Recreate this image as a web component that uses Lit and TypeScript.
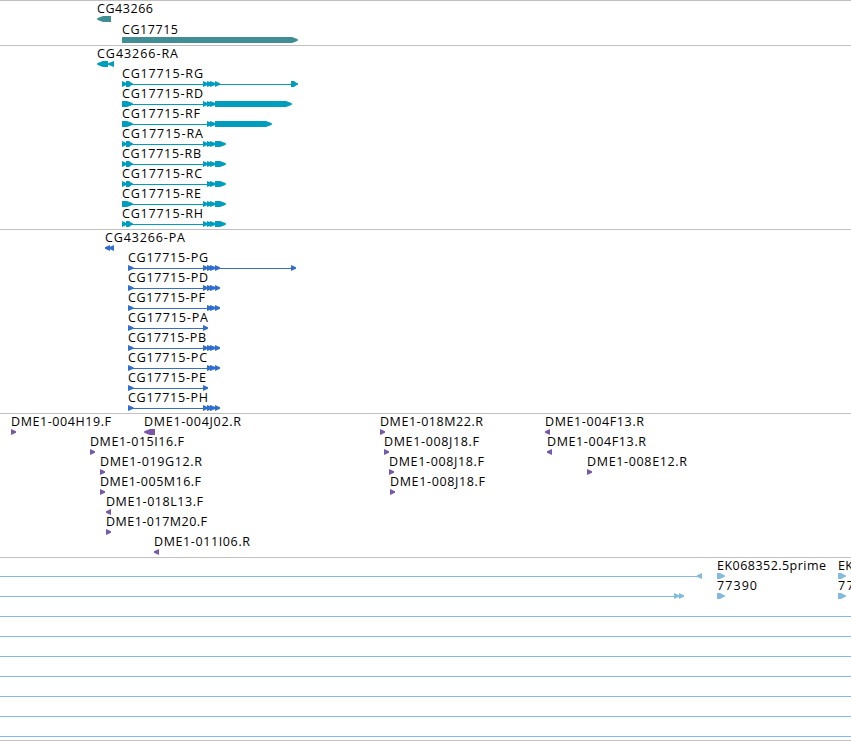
import { css, html, LitElement, svg } from 'lit';
import { customElement } from 'lit/decorators.js';

// start, end; start > end is a glyph on the reverse strand
type Span = [number, number];

interface Feature {
  name?: string;
  x: number;
  width?: number;
  spans: Span[];
  line?: Span;
}

interface Track {
  kind: string;
  rows: Feature[][];
}

const gene = (name: string, x: number, width: number, spans: Span[], line?: Span): Feature => ({
  name,
  x,
  width,
  spans,
  line,
});

const read = (name: string, x: number, width: number, end: number, reverse = false): Feature => ({
  name: `DME1-${name}`,
  x,
  width,
  spans: [reverse ? [end, x] : [x, end]],
});

const START: Span[] = [[122, 127], [126, 133]];
const MIDDLE: Span[] = [[203, 208], [207, 213], [210, 216]];
const TAIL: Span = [215, 226];
const CDS: Span[] = [[128, 133.5], [203, 208], [207, 213], [210, 216], [215, 220]];
const CDS_SHORT: Span[] = [[128, 133.5], [207, 213], [210, 216], [215, 220]];

const TRACKS: Track[] = [
  {
    kind: 'gene',
    rows: [
      [gene('CG43266', 97, 56, [[111, 97]])],
      [gene('CG17715', 122, 56, [[122, 298]])],
    ],
  },
  {
    kind: 'mrna',
    rows: [
      [gene('CG43266-RA', 97, 81, [[108, 97], [114, 108]])],
      [gene('CG17715-RG', 122, 81, [...START, ...MIDDLE, [215, 220], [291, 298]], [122, 298])],
      [gene('CG17715-RD', 122, 81, [[122, 133], ...MIDDLE, [215, 292]], [122, 220])],
      [gene('CG17715-RF', 122, 78, [[122, 133], [207, 213], [210, 216], [215, 272]], [122, 220])],
      [gene('CG17715-RA', 122, 81, [...START, ...MIDDLE, TAIL], [122, 220])],
      [gene('CG17715-RB', 122, 79, [...START, ...MIDDLE, TAIL], [122, 220])],
      [gene('CG17715-RC', 122, 80, [...START, [207, 213], [210, 216], TAIL], [122, 220])],
      [gene('CG17715-RE', 122, 79, [[122, 133], ...MIDDLE, TAIL], [122, 220])],
      [gene('CG17715-RH', 122, 81, [...START, ...MIDDLE, TAIL], [122, 220])],
    ],
  },
  {
    kind: 'cds',
    rows: [
      [gene('CG43266-PA', 105, 80, [[110, 105], [114, 109]])],
      [gene('CG17715-PG', 128, 80, [...CDS, [291, 296]], [128, 295])],
      [gene('CG17715-PD', 128, 80, CDS, [128, 218])],
      [gene('CG17715-PF', 128, 77, CDS_SHORT, [128, 218])],
      [gene('CG17715-PA', 128, 80, [[128, 133.5], [203, 208]], [128, 207])],
      [gene('CG17715-PB', 128, 78, CDS, [128, 218])],
      [gene('CG17715-PC', 128, 79, CDS_SHORT, [128, 218])],
      [gene('CG17715-PE', 128, 78, [[128, 133.5], [203, 208]], [128, 207])],
      [gene('CG17715-PH', 128, 80, CDS, [128, 218])],
    ],
  },
  {
    kind: 'read',
    rows: [
      [
        read('004H19.F', 11, 100, 16),
        read('004J02.R', 144, 97, 155, true),
        read('018M22.R', 380, 103, 385),
        read('004F13.R', 545, 99, 550, true),
      ],
      [
        read('015I16.F', 90, 94, 95),
        read('008J18.F', 384, 95, 389),
        read('004F13.R', 547, 99, 552, true),
      ],
      [
        read('019G12.R', 100, 102, 105),
        read('008J18.F', 389, 95, 394),
        read('008E12.R', 587, 100, 592),
      ],
      [read('005M16.F', 100, 101, 105), read('008J18.F', 390, 95, 395)],
      [read('018L13.F', 106, 97, 111, true)],
      [read('017M20.F', 106, 101, 111)],
      [read('011I06.R', 154, 96, 159, true)],
    ],
  },
  {
    kind: 'insertion',
    rows: [
      [
        { x: 0, spans: [[702, 697]], line: [0, 700] },
        gene('EK068352.5prime', 717, 109, [[717, 725]]),
        gene('EK', 838, 15, [[838, 846]]),
      ],
      [
        { x: 0, spans: [[674, 679], [679, 684]], line: [0, 682] },
        gene('77390', 717, 40, [[717, 725]]),
        gene('77', 838, 16, [[838, 846]]),
      ],
      ...Array.from({ length: 7 }, (): Feature[] => [{ x: 0, spans: [], line: [0, 851] }]),
    ],
  },
];

@customElement('app-root')
export class AppRoot extends LitElement {
  static styles = css`
    :host {
      display: block;
      width: 851px;
      height: 741px;
      overflow: hidden;
      background: #fff;
    }
    .track {
      border-top: 1px solid #c0c0c0;
      padding-bottom: 3px;
      color: #7859a8;
    }
    .gene {
      padding-bottom: 2px;
      color: #408d93;
    }
    .mrna {
      color: #009dbf;
    }
    .cds {
      color: #326ecb;
    }
    .insertion {
      padding-bottom: 2px;
      border-bottom: 1px solid #c0c0c0;
      color: #83bbdf;
    }
    svg {
      display: block;
      width: 100%;
      height: 20px;
      overflow: visible;
      fill: currentColor;
    }
    .gene svg {
      height: 21px;
    }
    text {
      font-family: 'Open Sans', 'DejaVu Sans', sans-serif;
      font-size: 12.5px;
      fill: #000;
    }
  `;

  glyph([from, to]: Span) {
    const dir = to > from ? 1 : -1;
    const length = Math.abs(to - from);
    if (length <= 6) {
      return svg`<path d="M${from} 15L${to} 17.2V18.8L${from} 21Z" />`;
    }
    // longer glyphs have a body and a stepped tip
    const neck = to - dir * Math.min(6, length - 3);
    return svg`<path d="M${from} 15H${neck}L${to - dir * 2} 16.6L${to} 17.6V18.6L${
      to - dir * 2
    } 19.6L${neck} 21H${from}Z" />`;
  }

  feature({ name, x, width, spans, line }: Feature) {
    return svg`
      ${line ? svg`<rect x=${line[0]} y="18" width=${line[1] - line[0]} height="1" />` : ''}
      ${spans.map((span) => this.glyph(span))}
      ${name ? svg`<text x=${x} y="12" textLength=${width}>${name}</text>` : ''}
    `;
  }

  render() {
    return TRACKS.map(
      ({ kind, rows }) => html`
        <div class="track ${kind}">
          ${rows.map((row) => html`<svg>${row.map((item) => this.feature(item))}</svg>`)}
        </div>
      `
    );
  }
}
